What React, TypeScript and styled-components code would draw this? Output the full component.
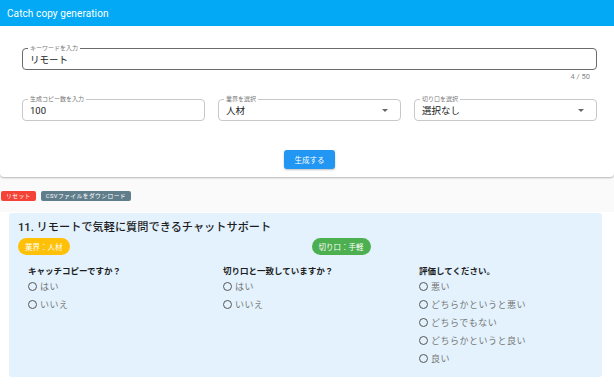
import React from "react";
import styled, { createGlobalStyle } from "styled-components";

const GlobalStyle = createGlobalStyle`
  html, body { margin: 0; padding: 0; }
  body {
    background: #fafafa;
    font-family: Roboto, "Noto Sans CJK JP", "Noto Sans", sans-serif;
    color: #222;
  }
  * { box-sizing: border-box; }
`;

const Header = styled.header`
  height: 26px;
  background: #03a9f4;
  color: #fff;
  display: flex;
  align-items: center;
  padding-left: 7px;
  font-size: 10px;
  letter-spacing: 0.1px;
`;

const FormCard = styled.section`
  background: #fff;
  border-radius: 0 0 4px 4px;
  box-shadow: 0 1px 2px rgba(0, 0, 0, 0.28);
  padding: 22px 17px 8px 22px;
  display: flex;
  flex-direction: column;
`;

const Field = styled.div<{ $focused?: boolean }>`
  position: relative;
  height: 22px;
  border: 1px solid ${(p) => (p.$focused ? "#6b6b6b" : "#c8c8c8")};
  border-radius: 4px;
  padding: 0 7px;
  display: flex;
  align-items: center;
  justify-content: space-between;
  font-size: 9.5px;
  color: #222;
`;

const FieldLabel = styled.span`
  position: absolute;
  top: -5px;
  left: 5px;
  padding: 0 2px;
  background: #fff;
  font-size: 6px;
  line-height: 8px;
  color: #777;
`;

const Arrow = styled.span`
  width: 0;
  height: 0;
  border-left: 3px solid transparent;
  border-right: 3px solid transparent;
  border-top: 3px solid #666;
  margin-right: 5px;
`;

const Counter = styled.div`
  margin-top: 3px;
  text-align: right;
  padding-right: 7px;
  font-size: 7.5px;
  line-height: 8px;
  color: #888;
`;

const SelectRow = styled.div`
  margin-top: 18px;
  display: grid;
  grid-template-columns: repeat(3, 1fr);
  gap: 13px;
`;

const ButtonRow = styled.div`
  margin-top: 29px;
  display: flex;
  justify-content: center;
`;

const GenerateButton = styled.button`
  height: 19px;
  width: 51px;
  border: none;
  border-radius: 3px;
  background: #2196f3;
  color: #fff;
  font-family: inherit;
  font-size: 7.5px;
  box-shadow: 0 1px 2px rgba(0, 0, 0, 0.25);
  padding: 0;
`;

const ActionBar = styled.div`
  display: flex;
  gap: 5px;
  padding: 14px 0 11px 1px;
`;

const SmallButton = styled.button<{ $color: string }>`
  height: 10px;
  border: none;
  border-radius: 2px;
  background: ${(p) => p.$color};
  color: #fff;
  font-family: inherit;
  font-size: 5.8px;
  padding: 0 5px;
  line-height: 10px;
  letter-spacing: 0.4px;
`;

const ResultArea = styled.div`
  background: #fff;
  padding: 1px 12px 20px 9px;
`;

const ResultCard = styled.article`
  background: #e3f2fd;
  border-radius: 3px;
  padding: 7px 9px 10px 9px;
`;

const Title = styled.h2`
  margin: 0;
  font-size: 11.2px;
  line-height: 16px;
  font-weight: 500;
  color: #1d1d1d;
`;

const ChipRow = styled.div`
  margin-top: 2px;
  display: grid;
  grid-template-columns: 1fr 1fr;
  gap: 12px;
`;

const Chip = styled.span<{ $color: string }>`
  justify-self: start;
  height: 17px;
  border-radius: 9px;
  padding: 0 7px;
  background: ${(p) => p.$color};
  color: #fff;
  font-size: 7.5px;
  display: inline-flex;
  align-items: center;
`;

const Questions = styled.div`
  margin-top: 10px;
  padding-left: 10px;
  display: grid;
  grid-template-columns: 195px 196px 1fr;
`;

const Question = styled.div`
  display: flex;
  flex-direction: column;
`;

const QuestionText = styled.div`
  font-size: 8.5px;
  line-height: 12px;
  font-weight: 700;
  color: #1d1d1d;
`;

const Option = styled.label`
  display: flex;
  align-items: center;
  gap: 3px;
  height: 18px;
  font-size: 9px;
  color: #777;
  letter-spacing: 0.5px;
`;

const RadioCircle = styled.span`
  width: 9px;
  height: 9px;
  border: 1.2px solid #555;
  border-radius: 50%;
  flex: none;
`;

const questions = [
  { q: "キャッチコピーですか？", opts: ["はい", "いいえ"] },
  { q: "切り口と一致していますか？", opts: ["はい", "いいえ"] },
  {
    q: "評価してください。",
    opts: ["悪い", "どちらかというと悪い", "どちらでもない", "どちらかというと良い", "良い"],
  },
];

export default function App() {
  return (
    <>
      <GlobalStyle />
      <Header>Catch copy generation</Header>
      <FormCard>
        <Field $focused>
          <FieldLabel>キーワードを入力</FieldLabel>
          リモート
        </Field>
        <Counter>4 / 50</Counter>
        <SelectRow>
          <Field>
            <FieldLabel>生成コピー数を入力</FieldLabel>
            100
          </Field>
          <Field>
            <FieldLabel>業界を選択</FieldLabel>
            人材
            <Arrow />
          </Field>
          <Field>
            <FieldLabel>切り口を選択</FieldLabel>
            選択なし
            <Arrow />
          </Field>
        </SelectRow>
        <ButtonRow>
          <GenerateButton>生成する</GenerateButton>
        </ButtonRow>
      </FormCard>
      <ActionBar>
        <SmallButton $color="#f44336">リセット</SmallButton>
        <SmallButton $color="#607d8b">CSVファイルをダウンロード</SmallButton>
      </ActionBar>
      <ResultArea>
        <ResultCard>
          <Title>11. リモートで気軽に質問できるチャットサポート</Title>
          <ChipRow>
            <Chip $color="#ffc107">業界：人材</Chip>
            <Chip $color="#4caf50">切り口：手軽</Chip>
          </ChipRow>
          <Questions>
            {questions.map((item) => (
              <Question key={item.q}>
                <QuestionText>{item.q}</QuestionText>
                {item.opts.map((o) => (
                  <Option key={o}>
                    <RadioCircle />
                    {o}
                  </Option>
                ))}
              </Question>
            ))}
          </Questions>
        </ResultCard>
      </ResultArea>
    </>
  );
}
